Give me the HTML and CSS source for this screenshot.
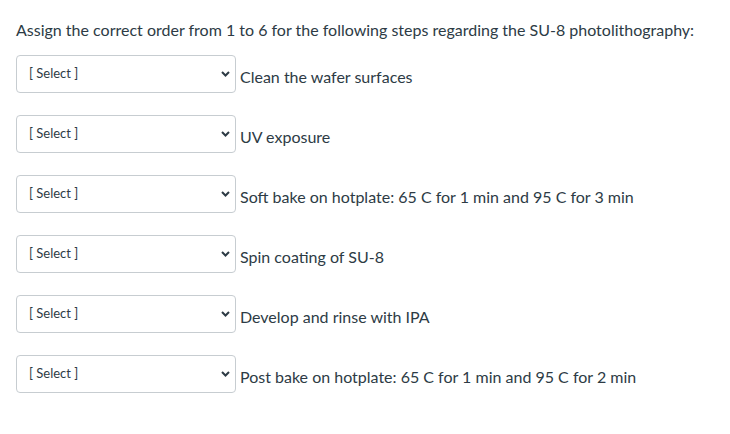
FILE: index.html
```html
<!DOCTYPE html>
<html>
<head>
<meta charset="utf-8">
<link rel="stylesheet" href="styles.css">
</head>
<body>
<div class="question">
  <p class="prompt">Assign the correct order from 1 to 6 for the following steps regarding the SU-8 photolithography:</p>
  <div class="rows">
    <div class="row">
      <div class="select-wrap">
        <select class="select"><option>[ Select ]</option></select>
        <svg class="chev" width="9" height="6" viewBox="0 0 9 6"><path d="M1 1 L4.5 4.5 L8 1" fill="none" stroke="#2d3b45" stroke-width="2"/></svg>
      </div>
      <span class="label">Clean the wafer surfaces</span>
    </div>
    <div class="row">
      <div class="select-wrap">
        <select class="select"><option>[ Select ]</option></select>
        <svg class="chev" width="9" height="6" viewBox="0 0 9 6"><path d="M1 1 L4.5 4.5 L8 1" fill="none" stroke="#2d3b45" stroke-width="2"/></svg>
      </div>
      <span class="label">UV exposure</span>
    </div>
    <div class="row">
      <div class="select-wrap">
        <select class="select"><option>[ Select ]</option></select>
        <svg class="chev" width="9" height="6" viewBox="0 0 9 6"><path d="M1 1 L4.5 4.5 L8 1" fill="none" stroke="#2d3b45" stroke-width="2"/></svg>
      </div>
      <span class="label">Soft bake on hotplate: 65 C for 1 min and 95 C for 3 min</span>
    </div>
    <div class="row">
      <div class="select-wrap">
        <select class="select"><option>[ Select ]</option></select>
        <svg class="chev" width="9" height="6" viewBox="0 0 9 6"><path d="M1 1 L4.5 4.5 L8 1" fill="none" stroke="#2d3b45" stroke-width="2"/></svg>
      </div>
      <span class="label">Spin coating of SU-8</span>
    </div>
    <div class="row">
      <div class="select-wrap">
        <select class="select"><option>[ Select ]</option></select>
        <svg class="chev" width="9" height="6" viewBox="0 0 9 6"><path d="M1 1 L4.5 4.5 L8 1" fill="none" stroke="#2d3b45" stroke-width="2"/></svg>
      </div>
      <span class="label">Develop and rinse with IPA</span>
    </div>
    <div class="row">
      <div class="select-wrap">
        <select class="select"><option>[ Select ]</option></select>
        <svg class="chev" width="9" height="6" viewBox="0 0 9 6"><path d="M1 1 L4.5 4.5 L8 1" fill="none" stroke="#2d3b45" stroke-width="2"/></svg>
      </div>
      <span class="label">Post bake on hotplate: 65 C for 1 min and 95 C for 2 min</span>
    </div>
  </div>
</div>
</body>
</html>
```
FILE: styles.css
```css
html, body {
  margin: 0;
  padding: 0;
  background: #ffffff;
}
body {
  font-family: Lato, "Liberation Sans", sans-serif;
  color: #2d3b45;
}
.question {
  padding: 18px 16px 0 16px;
}
.prompt {
  margin: 0;
  font-size: 16px;
  line-height: 24px;
}
.rows {
  display: flex;
  flex-direction: column;
  gap: 22px;
  margin-top: 13px;
}
.row {
  display: flex;
  align-items: center;
  gap: 4px;
}
.select-wrap {
  position: relative;
  width: 220px;
  height: 38px;
  flex: none;
}
.select {
  appearance: none;
  -webkit-appearance: none;
  width: 100%;
  height: 100%;
  margin: 0;
  box-sizing: border-box;
  border: 1px solid #c7cdd1;
  border-radius: 4px;
  background: #ffffff;
  font-family: Lato, "Liberation Sans", sans-serif;
  font-size: 13px;
  color: #2d3b45;
  padding: 0 0 2px 12px;
}
.chev {
  position: absolute;
  right: 6px;
  top: 16px;
}
.label {
  font-size: 16px;
  line-height: 24px;
  padding-top: 5px;
}
```
